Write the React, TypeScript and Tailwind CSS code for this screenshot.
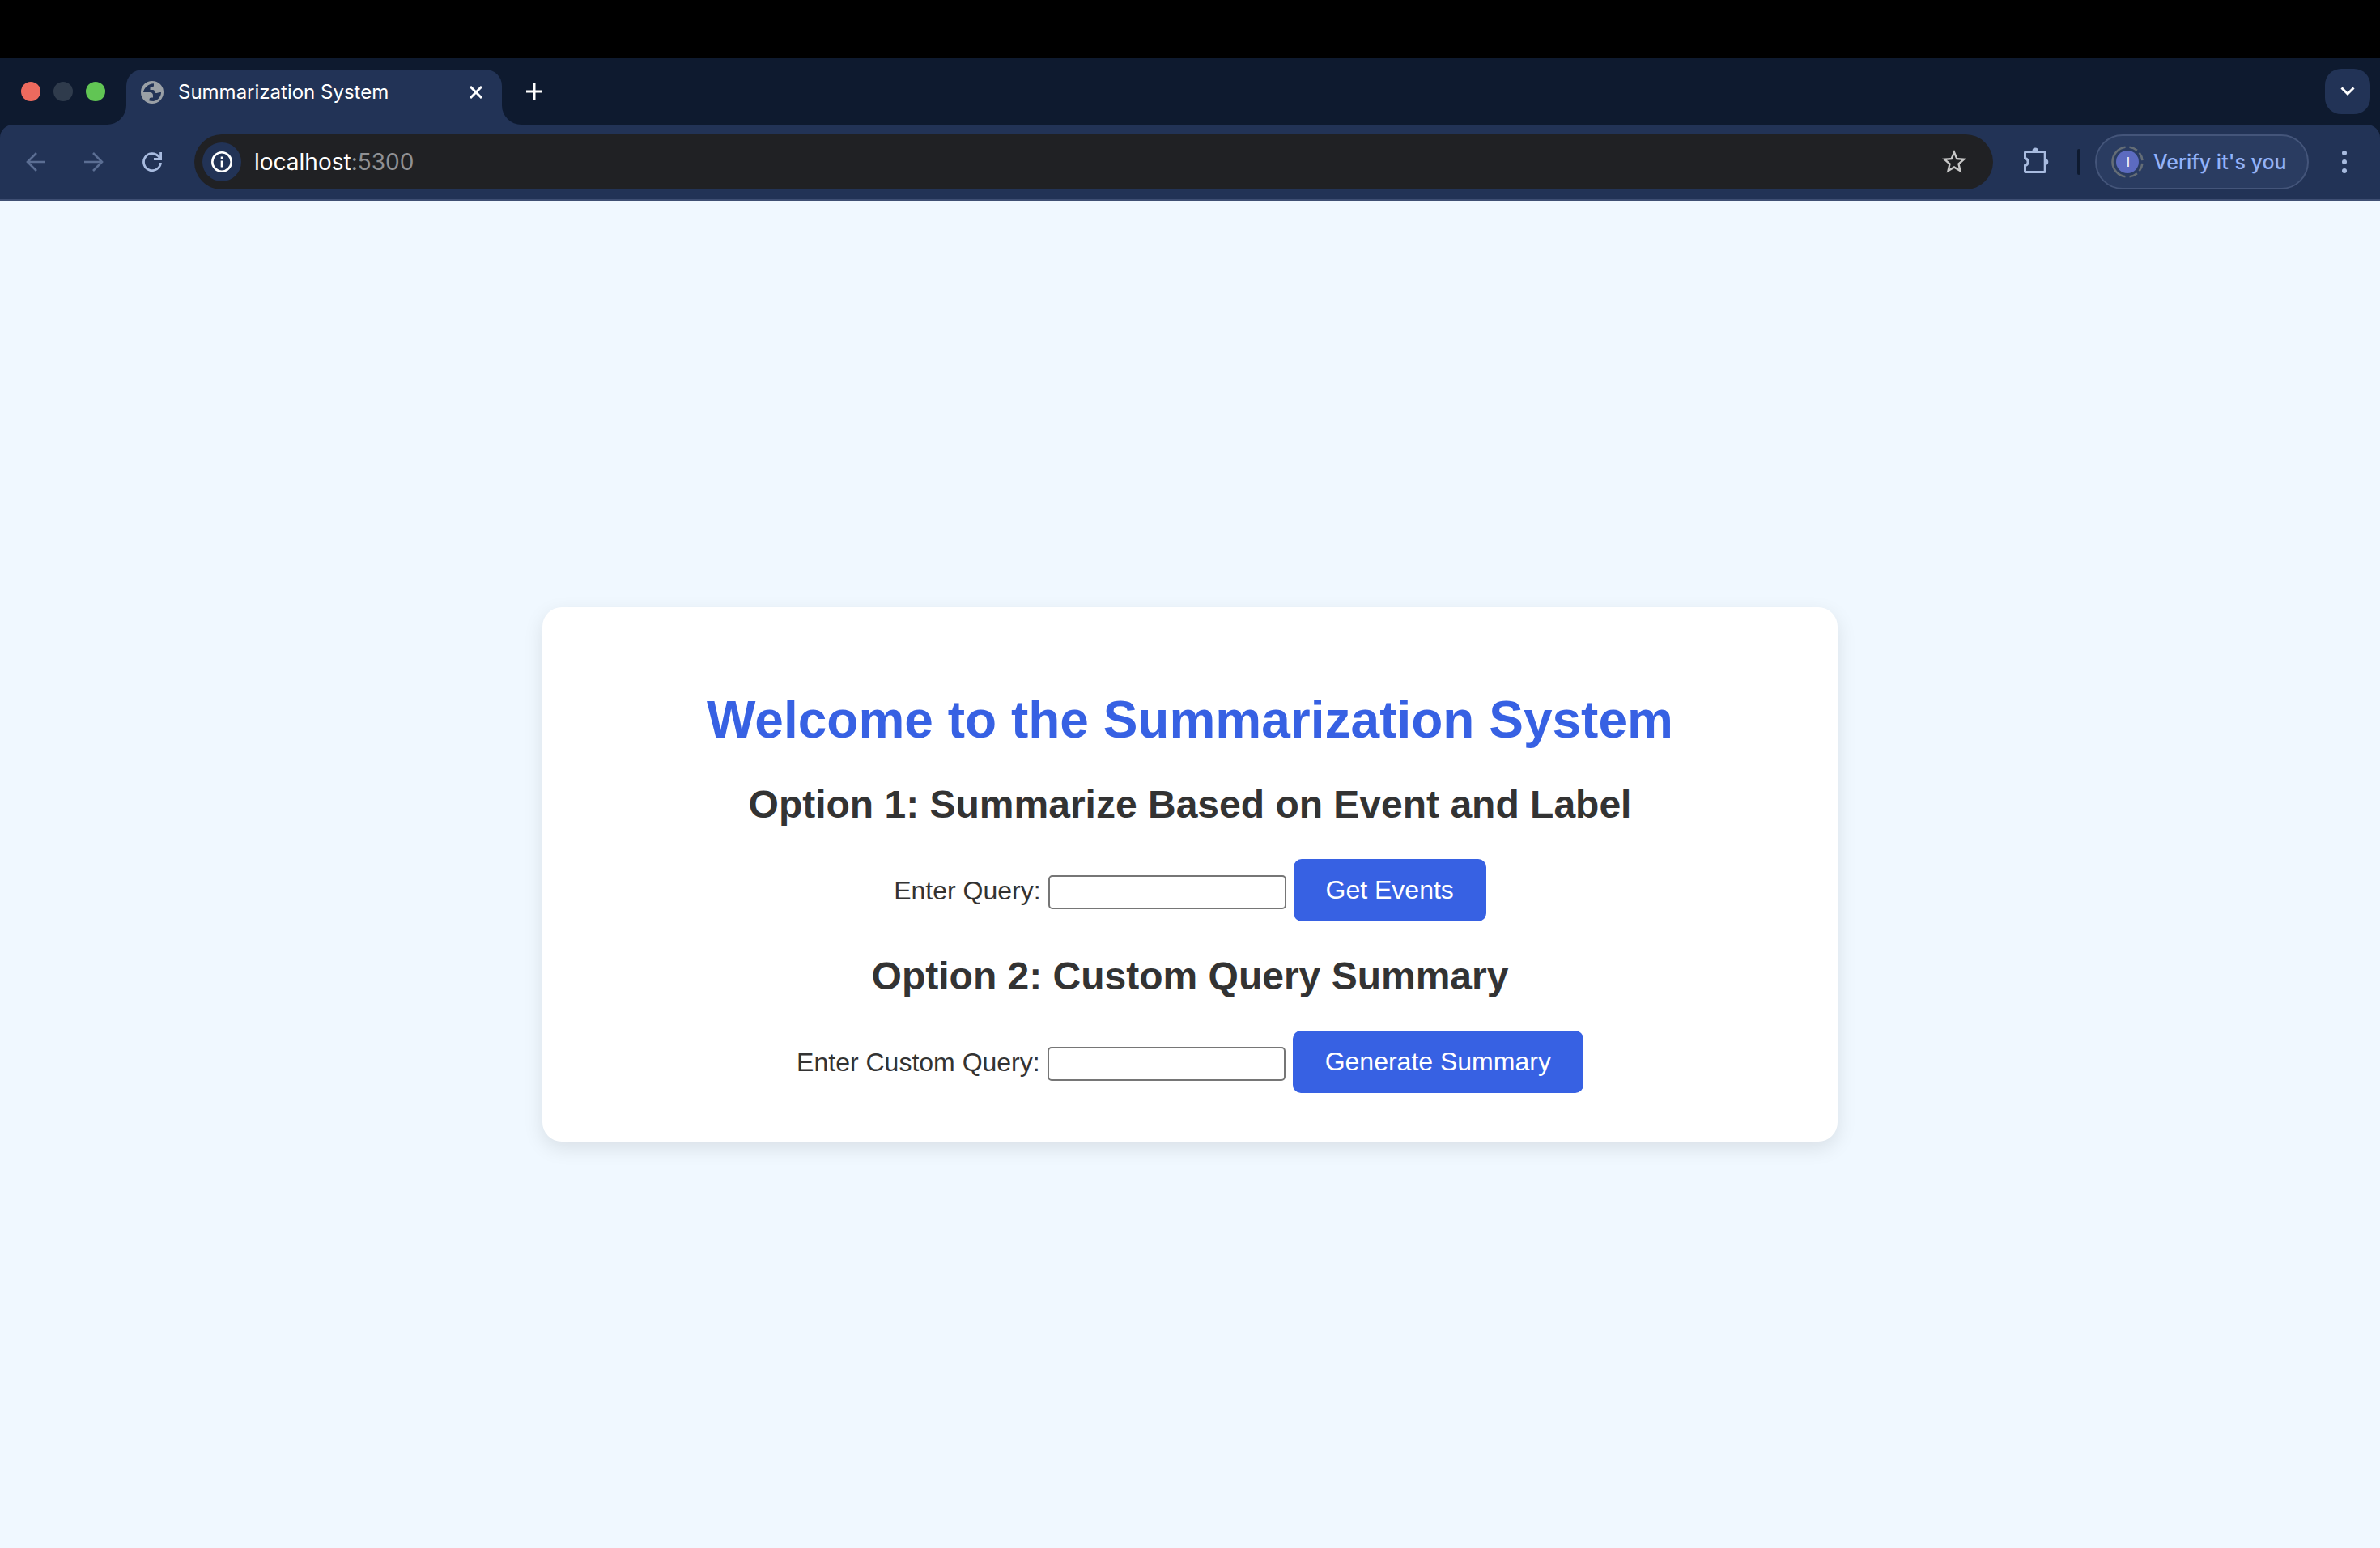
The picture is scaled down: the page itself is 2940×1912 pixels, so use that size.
import type { ReactNode } from "react";

function IconButton({ label, children }: { label: string; children: ReactNode }) {
  return (
    <button type="button" aria-label={label} className="flex size-10 shrink-0 items-center justify-center">
      {children}
    </button>
  );
}

function Globe() {
  return (
    <svg viewBox="0 0 28 28" className="size-7 shrink-0" aria-hidden="true">
      <circle cx="14" cy="14" r="14" fill="#9aa0a6" />
      <path
        d="M3 14C4 8.500 9 3.500 16 3.200V5.500C16 7 15 7.300 13.500 7.300 12 7.300 11.500 7.800 11.500 9V11H15C16.300 11 16.800 11.800 16.800 13 17 14.500 18 15 19.500 15 21 15 21.500 14 25 14 25 19 21 24.500 15.500 25L10.500 24.500V23C10.500 21.300 11.300 20.500 13 20.500H15V18C15 15.500 13.500 14 11 14Z"
        fill="#223356"
      />
    </svg>
  );
}

function TabStrip() {
  return (
    <div className="flex h-[82px] items-end bg-[#0e1a2f] pr-3">
      <div className="flex h-[82px] w-[156px] shrink-0 items-center gap-4 pl-[26px]">
        <button type="button" aria-label="Close window" className="size-6 rounded-full bg-[#ed6a5e]" />
        <button type="button" aria-label="Minimize window" className="size-6 rounded-full bg-[#2f3b4c]" />
        <button type="button" aria-label="Zoom window" className="size-6 rounded-full bg-[#61c554]" />
      </div>
      <div className="relative flex h-[68px] w-[464px] items-center rounded-t-[20px] bg-[#223356] pb-3 pl-[18px] pr-3 text-white">
        <svg viewBox="0 0 24 24" className="absolute -left-6 bottom-0 size-6" fill="#223356" aria-hidden="true">
          <path d="M24 0v24H0A24 24 0 0 0 24 0z" />
        </svg>
        <svg viewBox="0 0 24 24" className="absolute -right-6 bottom-0 size-6" fill="#223356" aria-hidden="true">
          <path d="M0 0v24h24A24 24 0 0 1 0 0z" />
        </svg>
        <Globe />
        <span className="ml-[18px] grow text-2xl leading-8">Summarization System</span>
        <IconButton label="Close tab">
          <svg viewBox="0 0 16 16" className="size-4" stroke="currentColor" strokeWidth="3" aria-hidden="true">
            <path d="M1 1l14 14M15 1L1 15" />
          </svg>
        </IconButton>
      </div>
      <div className="flex h-[82px] grow items-center justify-between pl-5 text-white">
        <IconButton label="New tab">
          <svg viewBox="0 0 20 20" className="size-5" stroke="currentColor" strokeWidth="3" aria-hidden="true">
            <path d="M10 0v20M0 10h20" />
          </svg>
        </IconButton>
        <button
          type="button"
          aria-label="Search tabs"
          className="flex size-14 items-center justify-center rounded-[20px] bg-[#223356]"
        >
          <svg viewBox="0 0 18 12" className="h-3 w-[18px]" fill="none" stroke="currentColor" strokeWidth="3" aria-hidden="true">
            <path d="M1.500 1.500L9 9l7.500-7.500" />
          </svg>
        </button>
      </div>
    </div>
  );
}

function Toolbar() {
  return (
    <div className="bg-[#0e1a2f]">
      <div className="flex h-[94px] items-center rounded-t-2xl border-b-2 border-[#3f4f73] bg-[#223356] pl-6 pr-6 text-[#a8bbdf]">
        <div className="flex gap-8 text-[#5b6e93]">
          <IconButton label="Back">
            <svg viewBox="0 0 24 24" className="size-6" fill="none" stroke="currentColor" strokeWidth="2.600" aria-hidden="true">
              <path d="M24 12H2M13 1L2 12l11 11" />
            </svg>
          </IconButton>
          <IconButton label="Forward">
            <svg viewBox="0 0 24 24" className="size-6" fill="none" stroke="currentColor" strokeWidth="2.600" aria-hidden="true">
              <path d="M0 12h22M11 1l11 11-11 11" />
            </svg>
          </IconButton>
          <span className="flex text-[#a8bbdf]">
            <IconButton label="Reload">
              <svg viewBox="0 0 24 24" className="size-6" fill="none" stroke="currentColor" strokeWidth="2.800" aria-hidden="true">
                <path d="M22.500 13A10.500 10.500 0 1 1 19.500 4.700L22 8" />
                <path d="M22.600 0v8.500H14" />
              </svg>
            </IconButton>
          </span>
        </div>
        <div className="ml-8 flex h-[68px] grow items-center rounded-full bg-[#202124] pl-[10px] pr-7 text-white">
          <button
            type="button"
            aria-label="View site information"
            className="flex size-12 shrink-0 items-center justify-center rounded-full bg-[#223356]"
          >
            <svg viewBox="0 0 26 26" className="size-[26px]" fill="none" stroke="currentColor" strokeWidth="2.600" aria-hidden="true">
              <circle cx="13" cy="13" r="11.700" />
              <path d="M13 11.500v8M13 6.500v2.600" />
            </svg>
          </button>
          <span className="ml-4 grow text-[28px] leading-9">
            localhost<span className="text-[#8f9093]">:5300</span>
          </span>
          <span className="flex text-[#c7c7c7]">
            <IconButton label="Bookmark this tab">
              <svg viewBox="2 2 20 20" className="size-[30px]" fill="currentColor" aria-hidden="true">
                <path d="M22 9.240l-7.190-.62L12 2 9.190 8.630 2 9.240l5.460 4.730L5.820 21 12 17.270 18.180 21l-1.630-7.030L22 9.240zM12 15.400l-3.760 2.270 1-4.280-3.320-2.880 4.380-.38L12 6.100l1.710 4.040 4.380.38-3.320 2.880 1 4.280L12 15.400z" />
              </svg>
            </IconButton>
          </span>
        </div>
        <div className="ml-[34px] flex shrink-0 items-center">
          <IconButton label="Extensions">
            <svg viewBox="0 0 32 36" className="h-9 w-8" aria-hidden="true">
              <path
                d="M2.500 5.500h22.700a1 1 0 0 1 1 1v23a1 1 0 0 1-1 1H2.500a1 1 0 0 1-1-1v-7a4.600 4.600 0 0 0 0-9v-7a1 1 0 0 1 1-1z"
                fill="none"
                stroke="currentColor"
                strokeWidth="3"
              />
              <path d="M10.500 4.500a3.700 4 0 0 1 7.400 0zM27 13.900a4.200 4.200 0 0 1 0 8.200z" fill="currentColor" />
            </svg>
          </IconButton>
          <span className="ml-[30px] h-8 w-1 rounded-full bg-[#0e1a2f]" />
          <button
            type="button"
            className="ml-[18px] flex h-[68px] w-[264px] items-center rounded-full border-2 border-[#44557a] bg-[#2a3c61] pl-[18px] text-[#93b2f8]"
          >
            <svg viewBox="0 0 40 40" className="size-10 shrink-0" aria-hidden="true">
              <circle
                cx="20"
                cy="20"
                r="18.500"
                fill="none"
                stroke="#646d76"
                strokeWidth="2.600"
                pathLength="360"
                strokeDasharray="32 12 32 16 164 16 32 12 32 12"
                strokeDashoffset="-6"
              />
              <circle cx="20" cy="20" r="14" fill="#5c6bc0" />
              <text x="21" y="26" textAnchor="middle" fontSize="16" fill="#fff">
                I
              </text>
            </svg>
            <span className="ml-3 whitespace-nowrap text-[25px] font-medium leading-8">Verify it's you</span>
          </button>
          <span className="ml-6 flex">
            <IconButton label="Menu">
              <svg viewBox="0 0 6 28" className="h-7 w-[6px]" fill="currentColor" aria-hidden="true">
                <circle cx="3" cy="3" r="3" />
                <circle cx="3" cy="14" r="3" />
                <circle cx="3" cy="25" r="3" />
              </svg>
            </IconButton>
          </span>
        </div>
      </div>
    </div>
  );
}

function QueryForm({ id, title, label, action }: { id: string; title: string; label: string; action: string }) {
  return (
    <section className="mt-10">
      <h2 className="text-5xl font-bold leading-[55px]">{title}</h2>
      <form className="mt-10 flex items-center justify-center gap-[9px]" onSubmit={(e) => e.preventDefault()}>
        <label htmlFor={id}>{label}</label>
        <input id={id} type="text" className="mt-1 h-[42px] w-[294px] rounded-[5px] border-2 border-[#767676] bg-white px-1 text-[27px]" />
        <button type="submit" className="rounded-[10px] bg-[#3761e3] px-10 py-5 leading-[37px] text-white">
          {action}
        </button>
      </form>
    </section>
  );
}

export default function App() {
  return (
    <div className="flex min-h-screen flex-col bg-[#f0f8ff]">
      <header className="bg-black pt-[72px] font-['Inter',sans-serif]">
        <TabStrip />
        <Toolbar />
      </header>
      <main className="flex grow items-center justify-center font-['Liberation_Sans',Arial,sans-serif] text-[32px] text-[#333333]">
        <div className="w-full max-w-[1600px] rounded-3xl bg-white p-[60px] text-center shadow-[0_8px_24px_rgba(0,0,0,0.1)]">
          <h1 className="mt-[43px] text-[64px] font-bold leading-[73px] text-[#3761e3]">
            Welcome to the Summarization System
          </h1>
          <QueryForm id="event-query" title="Option 1: Summarize Based on Event and Label" label="Enter Query:" action="Get Events" />
          <QueryForm id="custom-query" title="Option 2: Custom Query Summary" label="Enter Custom Query:" action="Generate Summary" />
        </div>
      </main>
    </div>
  );
}
